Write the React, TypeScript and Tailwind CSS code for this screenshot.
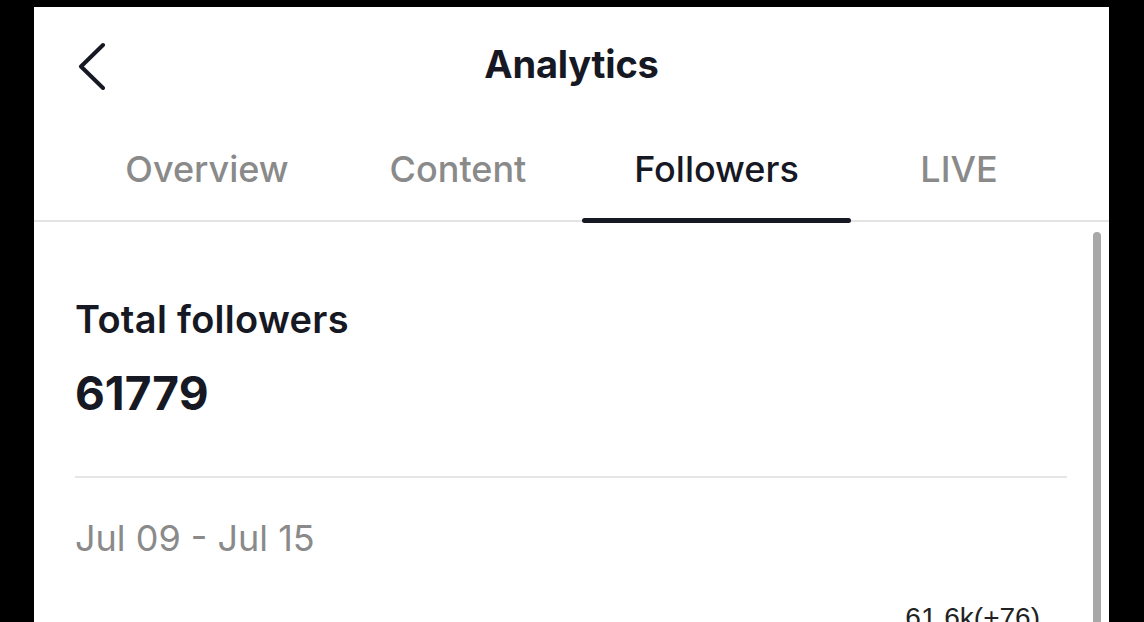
const tabs = [
  { label: "Overview", width: "w-[254px]", active: false },
  { label: "Content", width: "w-[248px]", active: false },
  { label: "Followers", width: "w-[269px]", active: true },
  { label: "LIVE", width: "w-[216px]", active: false },
];

function BackChevron() {
  return (
    <svg width="30" height="48" viewBox="0 0 30 48" fill="none" aria-hidden="true">
      <path
        d="M25 3 L3 24.5 L25 46"
        stroke="#161823"
        strokeWidth="4"
        strokeLinecap="round"
        strokeLinejoin="round"
      />
    </svg>
  );
}

export default function App() {
  return (
    <div
      className="w-[1144px] h-[622px] bg-black pt-[7px] pl-[34px] pr-[35px] overflow-hidden"
      style={{ fontFamily: "Inter, 'Noto Sans', sans-serif" }}
    >
      <div className="flex flex-col h-full bg-white">
        {/* Header */}
        <div className="relative flex items-center justify-center h-[113px] shrink-0">
          <div className="absolute left-[44px] top-[35px]">
            <BackChevron />
          </div>
          <h1 className="text-[38px] leading-none font-bold text-[#161823] tracking-[-0.2px]">
            Analytics
          </h1>
        </div>

        {/* Tabs */}
        <div className="flex h-[102px] shrink-0 border-b-2 border-[#e3e3e3] pl-[46px]">
          {tabs.map((tab) => (
            <div key={tab.label} className={`${tab.width} flex flex-col items-center`}>
              <span
                className={`mt-[31px] text-[36px] leading-none font-medium ${
                  tab.active ? "text-[#161823]" : "text-[#8a8a8a]"
                }`}
              >
                {tab.label}
              </span>
              {tab.active && (
                <div className="mt-auto mb-[-3px] w-full h-[5px] rounded-full bg-[#161823]" />
              )}
            </div>
          ))}
        </div>

        {/* Body */}
        <div className="flex flex-1 min-h-0 overflow-hidden">
          <div className="flex-1 flex flex-col pl-[41px] pr-[26px]">
            <div className="shrink-0 mt-[78px] text-[38px] leading-none font-semibold text-[#161823] tracking-[0.3px]">
              Total followers
            </div>
            <div className="shrink-0 mt-[32px] text-[46px] leading-none font-bold text-[#161823]">
              61779
            </div>
            <div className="shrink-0 mt-[60px] h-[2px] bg-[#e6e6e6]" />
            <div className="shrink-0 mt-[42px] text-[36px] leading-none text-[#8a8a8a]">
              Jul 09 - Jul 15
            </div>
            <div
              className="shrink-0 mt-[48px] self-end pr-[27px] text-[28px] leading-none text-[#222]"
              style={{ fontFamily: "'Liberation Sans', Arial, sans-serif" }}
            >
              61.6k(+76)
            </div>
          </div>
          <div className="w-[8px] mr-[8px] mt-[10px] rounded-t-full bg-[#a8a8a8]" />
        </div>
      </div>
    </div>
  );
}
